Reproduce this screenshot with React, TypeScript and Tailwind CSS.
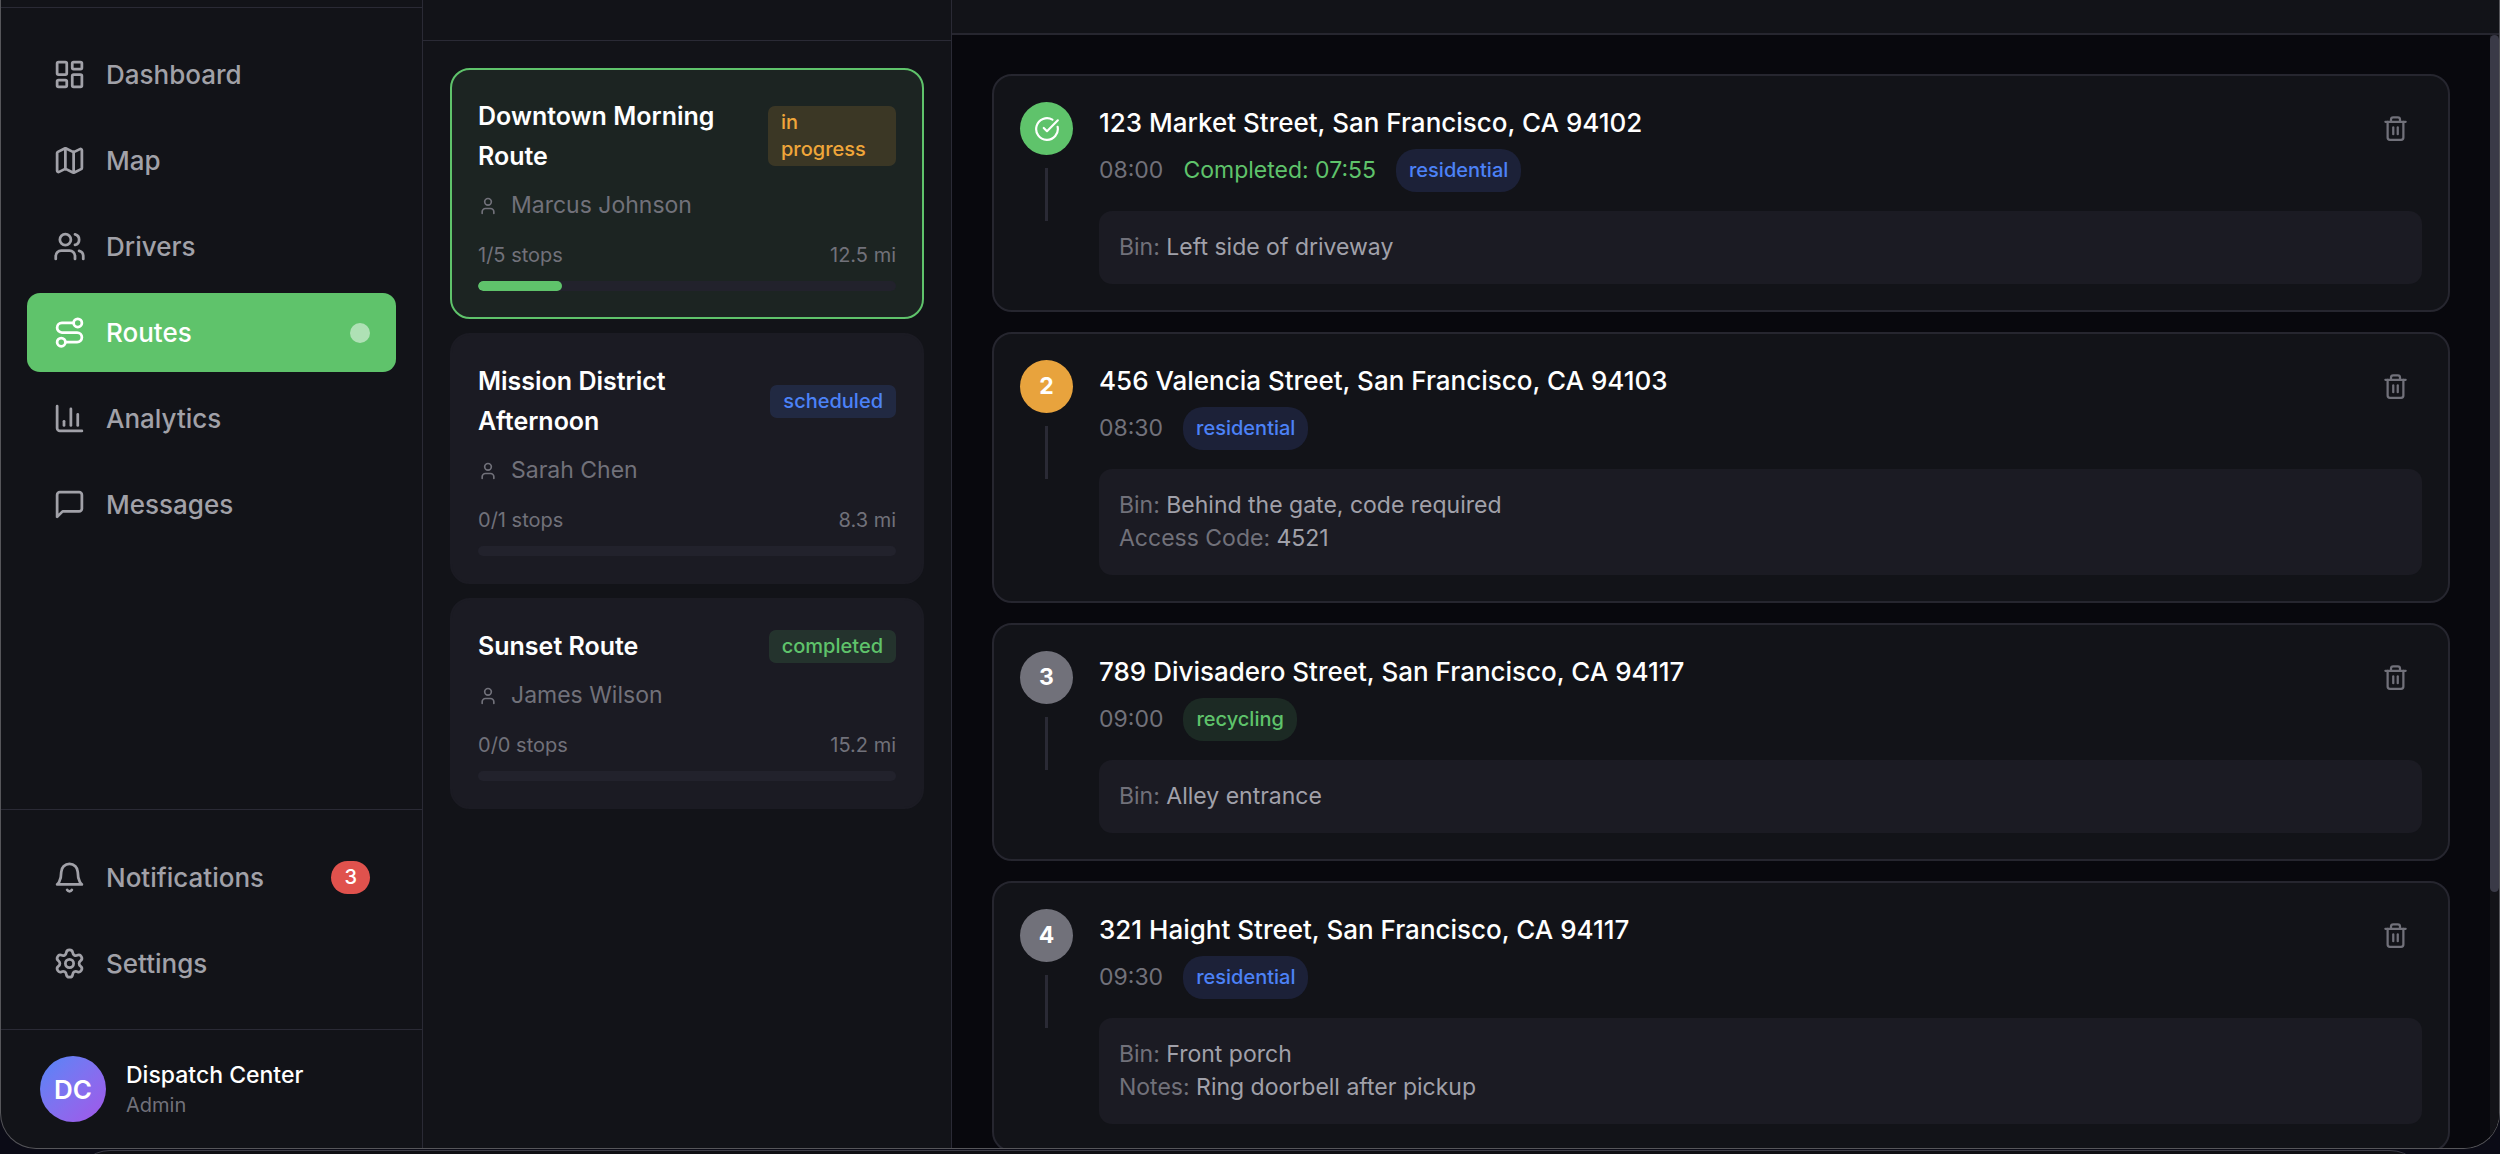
import React from "react";
import { LayoutDashboard, Map as MapIcon, Users, Route as RouteIcon, ChartColumn, Settings, User, Trash2, CircleCheckBig } from "lucide-react";

const svgProps = {
  viewBox: "0 0 24 24",
  fill: "none",
  stroke: "currentColor",
  strokeWidth: 2,
  strokeLinecap: "round" as const,
  strokeLinejoin: "round" as const,
  "aria-hidden": true,
};

function MessageIcon({ className }: { className?: string }) {
  return (
    <svg {...svgProps} className={className}>
      <path d="M21 15a2 2 0 0 1-2 2H7l-4 4V5a2 2 0 0 1 2-2h14a2 2 0 0 1 2 2z" />
    </svg>
  );
}

function BellIcon({ className }: { className?: string }) {
  return (
    <svg {...svgProps} className={className}>
      <path d="M6 8a6 6 0 0 1 12 0c0 7 3 9 3 9H3s3-2 3-9" />
      <path d="M10.3 21a1.94 1.94 0 0 0 3.4 0" />
    </svg>
  );
}

type IconType = React.ComponentType<{ className?: string }>;

function NavItem({ icon: Icon, label, active, count }: { icon: IconType; label: string; active?: boolean; count?: number }) {
  return (
    <button
      type="button"
      aria-current={active ? "page" : undefined}
      className={`flex h-[79px] w-full items-center gap-5 rounded-[13px] px-[26px] text-left text-[26px] font-medium ${
        active ? "bg-[#5fc36b] text-white" : "text-[#a1a1a8]"
      }`}
    >
      <Icon className="size-[33px] shrink-0" />
      <span className="flex-1">{label}</span>
      {active && <span className="size-5 rounded-full bg-white/50" />}
      {count !== undefined && (
        <span className="rounded-full bg-[#e0524d] px-[13px] text-[20px] leading-[33px] font-medium text-white">{count}</span>
      )}
    </button>
  );
}

function Sidebar() {
  return (
    <aside className="flex w-[422px] shrink-0 flex-col border-r border-[#2a2a35]">
      <div className="h-2 shrink-0 border-b border-[#2a2a35]" />
      <nav className="flex flex-1 flex-col gap-[7px] px-[26px] pt-[27px]">
        <NavItem icon={LayoutDashboard} label="Dashboard" />
        <NavItem icon={MapIcon} label="Map" />
        <NavItem icon={Users} label="Drivers" />
        <NavItem icon={RouteIcon} label="Routes" active />
        <NavItem icon={ChartColumn} label="Analytics" />
        <NavItem icon={MessageIcon} label="Messages" />
      </nav>
      <div className="flex flex-col gap-[7px] border-t border-[#2a2a35] px-[26px] pt-7 pb-[26px]">
        <NavItem icon={BellIcon} label="Notifications" count={3} />
        <NavItem icon={Settings} label="Settings" />
      </div>
      <div className="flex items-center gap-5 border-t border-[#2a2a35] px-[39px] py-[26px]">
        <div className="flex size-[66px] items-center justify-center rounded-full bg-linear-135 from-[#4f86f7] to-[#a155e8] text-[26px] font-semibold text-white">
          DC
        </div>
        <div>
          <p className="text-[23px] leading-8 font-medium text-white">Dispatch Center</p>
          <p className="text-[20px] leading-7 text-[#71717a]">Admin</p>
        </div>
      </div>
    </aside>
  );
}

type RouteInfo = { name: string; status: string; driver: string; done: number; total: number; miles: string; selected?: boolean };

const routes: RouteInfo[] = [
  { name: "Downtown Morning Route", status: "in progress", driver: "Marcus Johnson", done: 1, total: 5, miles: "12.5", selected: true },
  { name: "Mission District Afternoon", status: "scheduled", driver: "Sarah Chen", done: 0, total: 1, miles: "8.3" },
  { name: "Sunset Route", status: "completed", driver: "James Wilson", done: 0, total: 0, miles: "15.2" },
];

const statusStyles: Record<string, string> = {
  "in progress": "bg-[#f0a63a]/15 text-[#f0a63a]",
  scheduled: "bg-[#4c82f7]/15 text-[#4c82f7]",
  completed: "bg-[#5fc36b]/15 text-[#5fc36b]",
};

function RouteCard({ route }: { route: RouteInfo }) {
  const percent = route.total ? (route.done / route.total) * 100 : 0;
  return (
    <button
      type="button"
      aria-pressed={!!route.selected}
      className={`block w-full rounded-[20px] border-2 p-[26px] text-left ${
        route.selected ? "border-[#5fc36b] bg-[#1c2422]" : "border-[#1b1b23] bg-[#1b1b23]"
      }`}
    >
      <div className="flex items-center justify-between">
        <h3 className="max-w-[270px] text-[25px] leading-10 font-semibold text-white">{route.name}</h3>
        <span className={`max-w-32 rounded-[7px] px-[13px] py-[3px] text-[20px] leading-[27px] font-medium ${statusStyles[route.status]}`}>
          {route.status}
        </span>
      </div>
      <div className="mt-[13px] flex items-center gap-[13px] text-[23px] leading-[33px] text-[#71717a]">
        <User className="size-5" />
        {route.driver}
      </div>
      <div className="mt-5 flex justify-between text-[20px] leading-[27px] text-[#71717a]">
        <span>{route.done}/{route.total} stops</span>
        <span>{route.miles} mi</span>
      </div>
      <div className="mt-3 h-[10px] overflow-hidden rounded-full bg-[#22222c]">
        <div className="h-full rounded-full bg-[#5fc36b]" style={{ width: `${percent}%` }} />
      </div>
    </button>
  );
}

type Stop = { n: number; address: string; time: string; completed?: string; kind: string; state: "done" | "current" | "pending"; details: [string, string][] };

const stops: Stop[] = [
  { n: 1, address: "123 Market Street, San Francisco, CA 94102", time: "08:00", completed: "07:55", kind: "residential", state: "done", details: [["Bin:", "Left side of driveway"]] },
  { n: 2, address: "456 Valencia Street, San Francisco, CA 94103", time: "08:30", kind: "residential", state: "current", details: [["Bin:", "Behind the gate, code required"], ["Access Code:", "4521"]] },
  { n: 3, address: "789 Divisadero Street, San Francisco, CA 94117", time: "09:00", kind: "recycling", state: "pending", details: [["Bin:", "Alley entrance"]] },
  { n: 4, address: "321 Haight Street, San Francisco, CA 94117", time: "09:30", kind: "residential", state: "pending", details: [["Bin:", "Front porch"], ["Notes:", "Ring doorbell after pickup"]] },
];

const markerStyles = { done: "bg-[#5fc36b]", current: "bg-[#e8a33d]", pending: "bg-[#71717a]" };
const kindStyles: Record<string, string> = {
  residential: "bg-[#1c2138] text-[#4c82f7]",
  recycling: "bg-[#1c2a24] text-[#5fc36b]",
};

function StopCard({ stop }: { stop: Stop }) {
  return (
    <li className="flex shrink-0 gap-[26px] rounded-[20px] border-2 border-[#26262f] bg-[#121318] p-[26px]">
      <div className="flex flex-col items-center gap-[13px]">
        <div className={`flex size-[53px] items-center justify-center rounded-full text-[23px] font-bold text-white ${markerStyles[stop.state]}`}>
          {stop.state === "done" ? <CircleCheckBig className="size-[26px]" /> : stop.n}
        </div>
        <div className="h-[53px] w-[3px] bg-[#2a2a35]" />
      </div>
      <div className="min-w-0 flex-1">
        <div className="flex items-start justify-between">
          <div>
            <h3 className="text-[26px] leading-[42px] font-medium text-white">{stop.address}</h3>
            <div className="mt-[5px] flex items-center gap-5 text-[23px] leading-[33px]">
              <span className="text-[#71717a]">{stop.time}</span>
              {stop.completed && <span className="text-[#5fc36b]">Completed: {stop.completed}</span>}
              <span className={`rounded-[20px] px-[13px] text-[20px] leading-[43px] font-medium ${kindStyles[stop.kind]}`}>{stop.kind}</span>
            </div>
          </div>
          <button type="button" aria-label={`Delete stop ${stop.n}`} className="p-[13px] text-[#71717a]">
            <Trash2 className="size-[27px]" />
          </button>
        </div>
        <div className="mt-[19px] rounded-[13px] bg-[#1b1b23] p-5 text-[23px] leading-[33px] text-[#a1a1aa]">
          {stop.details.map(([label, value]) => (
            <p key={label}>
              <span className="text-[#71717a]">{label}</span> {value}
            </p>
          ))}
        </div>
      </div>
    </li>
  );
}

export default function App() {
  return (
    <div className="flex h-screen flex-col overflow-hidden bg-[#0b0b16] font-['Inter','Liberation_Sans',sans-serif]">
      <div className="flex min-h-0 flex-1 overflow-hidden rounded-b-[36px] border-x border-b border-[#56565a] bg-[#121318]">
        <Sidebar />
        <section aria-label="Routes" className="w-[529px] shrink-0 border-r border-[#2a2a35]">
          <div className="h-[41px] border-b border-[#2a2a35]" />
          <div className="flex flex-col gap-[14px] px-[27px] pt-[27px]">
            {routes.map((r) => (
              <RouteCard key={r.name} route={r} />
            ))}
          </div>
        </section>
        <main className="flex min-w-0 flex-1 flex-col">
          <div className="h-[35px] shrink-0 border-b-2 border-[#26262f]" />
          <div className="flex min-h-0 flex-1 bg-[#08080d]">
            <ol className="flex min-w-0 flex-1 flex-col gap-5 px-10 pt-[39px]">
              {stops.map((s) => (
                <StopCard key={s.n} stop={s} />
              ))}
            </ol>
            <div aria-hidden="true" className="w-[9px] shrink-0 bg-[#131318]">
              <div className="h-[77%] rounded-full bg-[#3a3a47]" />
            </div>
          </div>
        </main>
      </div>
      {/* Top edge of the window that sits behind this one */}
      <div aria-hidden="true" className="h-[5px] shrink-0 overflow-hidden px-[74px] pt-px">
        <div className="h-20 rounded-[36px] border border-[#3c3c46] bg-[#101014]" />
      </div>
    </div>
  );
}
